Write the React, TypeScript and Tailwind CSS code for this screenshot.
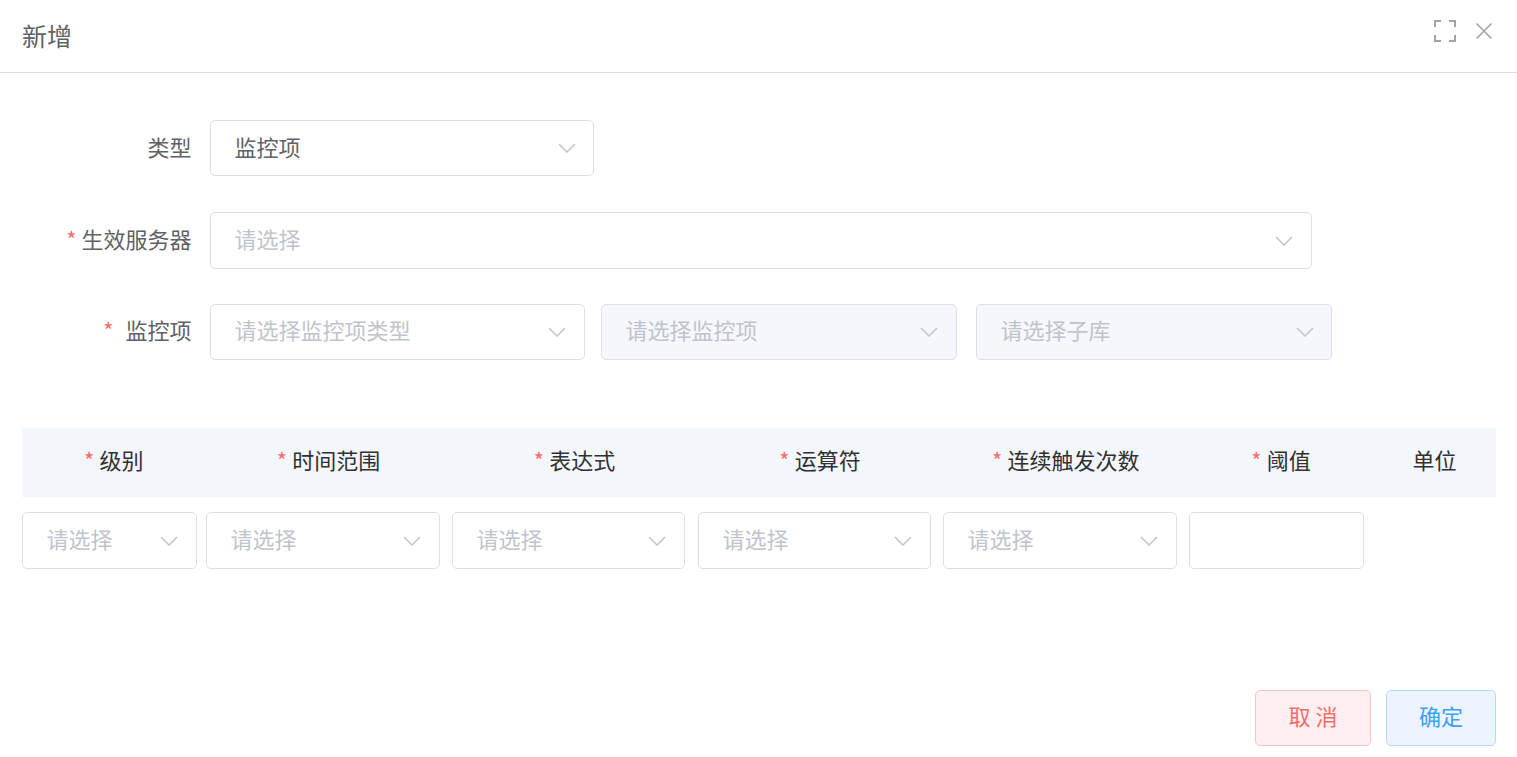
import React from 'react';

const font = { fontFamily: '"Noto Sans CJK SC", "Noto Sans", sans-serif' };

const Chevron = ({ className = '' }: { className?: string }) => (
  <svg className={className} width="18" height="10" viewBox="0 0 18 10" fill="none" stroke="#c0c4cc" strokeWidth="1.5">
    <path d="M1 1l8 8 8-8" />
  </svg>
);

interface SelectProps {
  value?: string;
  placeholder?: string;
  disabled?: boolean;
  className: string;
  chevronRight?: string;
  textPad?: string;
}

const Select: React.FC<SelectProps> = ({ value, placeholder, disabled, className, chevronRight = 'mr-[18px]', textPad = 'pb-[4px]' }) => (
  <div
    className={`flex items-center justify-between rounded-[5px] border border-[#dcdfe6] pl-[23.5px] text-[22px] ${
      disabled ? 'bg-[#f5f7fa]' : 'bg-white'
    } ${className}`}
  >
    <span className={`${textPad} ${value ? 'text-[#606266]' : 'text-[#c0c4cc]'}`}>{value || placeholder}</span>
    <Chevron className={chevronRight} />
  </div>
);

const Label = ({ text, required, gap = 'ml-[5px]', pad = 'pb-[4px]' }: { text: string; required?: boolean; gap?: string; pad?: string }) => (
  <div className={`flex w-[169.5px] items-center justify-end text-[22px] text-[#606266] ${pad}`}>
    {required && <span className="text-[#f56c6c]">*</span>}
    <span className={gap}>{text}</span>
  </div>
);

const columns = [
  { name: '级别', width: 'w-[183.5px]', required: true },
  { name: '时间范围', width: 'w-[246px]', required: true },
  { name: '表达式', width: 'w-[246px]', required: true },
  { name: '运算符', width: 'w-[245px]', required: true },
  { name: '连续触发次数', width: 'w-[246.5px]', required: true },
  { name: '阈值', width: 'w-[184px]', required: true },
  { name: '单位', width: 'w-[123px]', required: false },
];

export default function App() {
  return (
    <div className="h-[757px] w-[1517px] overflow-hidden bg-white" style={font}>
      <header className="flex h-[73px] items-start justify-between border-b border-[#dcdfe6] pl-[22px] pr-[24px]">
        <h1 className="mt-[17px] text-[25px] leading-[36px] font-normal text-[#606266]">新增</h1>
        <div className="mt-[20px] flex items-center gap-[19px]">
          <svg width="22" height="22" viewBox="0 0 22 22" fill="none" stroke="#a0a4ab" strokeWidth="2">
            <path d="M1 7V1h6M15 1h6v6M21 15v6h-6M7 21H1v-6" />
          </svg>
          <svg width="18" height="18" viewBox="0 0 18 18" fill="none" stroke="#a0a4ab" strokeWidth="1.6">
            <path d="M1.5 1.5l15 15M16.5 1.5l-15 15" />
          </svg>
        </div>
      </header>

      <div className="pt-[47px]">
        <div className="flex items-center pl-[22px]">
          <Label text="类型" />
          <Select value="监控项" className="ml-[18.5px] h-[56px] w-[384px]" chevronRight="mr-[17px]" />
        </div>
        <div className="mt-[36px] flex items-center pl-[22px]">
          <Label text="生效服务器" required />
          <Select placeholder="请选择" className="ml-[18.5px] h-[57px] w-[1102px]" />
        </div>
        <div className="mt-[35px] flex items-center pl-[22px]">
          <Label text="监控项" required gap="ml-[12px]" pad="pb-[6px]" />
          <Select placeholder="请选择监控项类型" textPad="pb-[6px]" className="ml-[18.5px] h-[56px] w-[375px]" />
          <Select placeholder="请选择监控项" textPad="pb-[6px]" disabled className="ml-[16px] h-[56px] w-[356px]" />
          <Select placeholder="请选择子库" textPad="pb-[6px]" chevronRight="mr-[17px]" disabled className="ml-[19px] h-[56px] w-[356px]" />
        </div>
      </div>

      <div className="ml-[22px] mt-[68px] w-[1474px]">
        <div className="flex h-[69px] items-center bg-[#f3f6fb] pb-[6px] text-[22px] text-[#303133]">
          {columns.map((c) => (
            <div key={c.name} className={`flex items-center justify-center ${c.width}`}>
              {c.required && <span className="mr-[5px] text-[#f56c6c]">*</span>}
              {c.name}
            </div>
          ))}
        </div>
        <div className="mt-[15px] flex">
          <div className="w-[184px]"><Select placeholder="请选择" className="h-[57px] w-[175px]" /></div>
          <div className="w-[246px]"><Select placeholder="请选择" className="h-[57px] w-[234px]" /></div>
          <div className="w-[246px]"><Select placeholder="请选择" className="h-[57px] w-[233px]" /></div>
          <div className="w-[245px]"><Select placeholder="请选择" className="h-[57px] w-[233px]" /></div>
          <div className="w-[246px]"><Select placeholder="请选择" className="h-[57px] w-[234px]" /></div>
          <div className="w-[184px]"><div className="h-[57px] w-[175px] rounded-[5px] border border-[#dcdfe6]" /></div>
        </div>
      </div>

      <div className="mt-[121px] flex justify-end gap-[15px] pr-[21px] text-[22px]">
        <button className="h-[56px] w-[116px] rounded-[5px] border border-[#fbc4c4] bg-[#fef0f0] pb-[6px] text-[#f56c6c]">取 消</button>
        <button className="h-[56px] w-[110px] rounded-[5px] border border-[#b3d8ff] bg-[#ecf5ff] pb-[6px] text-[#409eff]">确定</button>
      </div>
    </div>
  );
}
